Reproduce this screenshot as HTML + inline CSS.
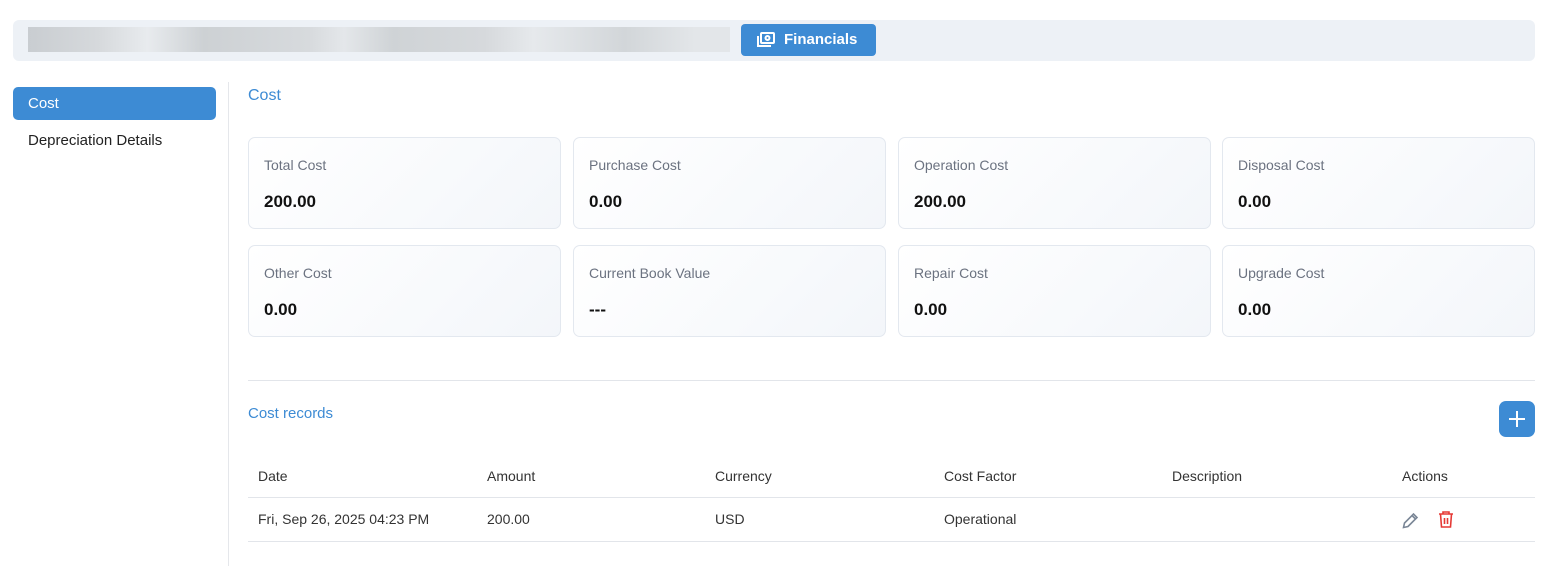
<!DOCTYPE html>
<html><head><style>
*{box-sizing:border-box;margin:0;padding:0}
body{width:1545px;height:566px;background:#fff;font-family:"Liberation Sans",sans-serif;position:relative;overflow:hidden;color:#1f2937}
.abs{position:absolute}
.top{left:13px;top:20px;width:1522px;height:41px;background:#edf1f6;border-radius:6px}
.blur{left:28px;top:27px;width:702px;height:25px;background:linear-gradient(90deg,#c9cdd1,#d6d9dc 10%,#e8ebee 17%,#cdd1d4 25%,#d7dadd 40%,#e4e7ea 45%,#cfd3d6 52%,#d6d9dc 65%,#e6e9ec 72%,#d2d6d9 85%,#e3e6e9 95%)}
.fin{left:741px;top:24px;width:135px;height:32px;background:#3d8bd4;border-radius:4px;color:#fff;font-size:15px;font-weight:bold;line-height:32px;padding-left:43px}
.side{left:13px;top:87px;width:203px;height:33px;background:#3d8bd4;border-radius:5px;color:#fff;font-size:15px;line-height:34px;padding-left:15px}
.dep{left:28px;top:132px;font-size:15px;color:#222}
.vl{left:228px;top:82px;width:1px;height:484px;background:#e5e7eb}
.h{color:#3d8bd4;font-size:16px}
.card{width:313px;height:92px;border:1px solid #e3e8ef;border-radius:7px;background:linear-gradient(135deg,#fff,#f3f6fa)}
.card .l{position:absolute;left:15px;top:19px;font-size:14px;color:#6b7280}
.card .v{position:absolute;left:15px;top:54px;font-size:17px;font-weight:bold;color:#111}
.hr{height:1px;background:#e2e5ea}
.th{font-size:14px;color:#333;top:468px}
.td{font-size:14px;color:#333;top:511px}
</style></head><body>
<div class="abs top"></div>
<div class="abs blur"></div>
<div class="abs fin"><svg class="abs" style="left:15px;top:8px" width="20" height="16" viewBox="0 0 20 16" fill="none" stroke="#fff" stroke-width="2"><rect x="5" y="1" width="13" height="10" rx="1"/><circle cx="11.5" cy="6" r="2"/><path d="M2 4v10h13"/></svg>Financials</div>
<div class="abs side">Cost</div>
<div class="abs dep">Depreciation Details</div>
<div class="abs vl"></div>
<div class="abs h" style="left:248px;top:87px">Cost</div>
<div class="abs card" style="left:248px;top:137px"><span class="l">Total Cost</span><span class="v">200.00</span></div>
<div class="abs card" style="left:573px;top:137px"><span class="l">Purchase Cost</span><span class="v">0.00</span></div>
<div class="abs card" style="left:898px;top:137px"><span class="l">Operation Cost</span><span class="v">200.00</span></div>
<div class="abs card" style="left:1222px;top:137px"><span class="l">Disposal Cost</span><span class="v">0.00</span></div>
<div class="abs card" style="left:248px;top:245px"><span class="l">Other Cost</span><span class="v">0.00</span></div>
<div class="abs card" style="left:573px;top:245px"><span class="l">Current Book Value</span><span class="v">---</span></div>
<div class="abs card" style="left:898px;top:245px"><span class="l">Repair Cost</span><span class="v">0.00</span></div>
<div class="abs card" style="left:1222px;top:245px"><span class="l">Upgrade Cost</span><span class="v">0.00</span></div>
<div class="abs hr" style="left:248px;top:380px;width:1287px"></div>
<div class="abs h" style="left:248px;top:405px;font-size:15px">Cost records</div>
<div class="abs" style="left:1499px;top:401px;width:36px;height:36px;background:#3d8bd4;border-radius:7px"><svg width="36" height="36"><path d="M18 10v16M10 18h16" stroke="#fff" stroke-width="2"/></svg></div>
<div class="abs th" style="left:258px">Date</div>
<div class="abs th" style="left:487px">Amount</div>
<div class="abs th" style="left:715px">Currency</div>
<div class="abs th" style="left:944px">Cost Factor</div>
<div class="abs th" style="left:1172px">Description</div>
<div class="abs th" style="left:1402px">Actions</div>
<div class="abs hr" style="left:248px;top:497px;width:1287px"></div>
<div class="abs td" style="left:258px">Fri, Sep 26, 2025 04:23 PM</div>
<div class="abs td" style="left:487px">200.00</div>
<div class="abs td" style="left:715px">USD</div>
<div class="abs td" style="left:944px">Operational</div>
<svg class="abs" style="left:1401px;top:510px" width="20" height="20" viewBox="0 0 20 20" fill="none" stroke="#7a8696" stroke-width="1.6"><path d="M2.5 17.5l1-4.5 9-9 3.5 3.5-9 9z M11 5.5l3.5 3.5"/></svg>
<svg class="abs" style="left:1437px;top:510px" width="18" height="19" viewBox="0 0 18 19" fill="none" stroke="#e53935" stroke-width="1.6"><path d="M2 4h14M6 4V2h6v2M3.5 4l1 13h9l1-13M7.5 8v6M10.5 8v6"/></svg>
<div class="abs hr" style="left:248px;top:541px;width:1287px"></div>
</body></html>
